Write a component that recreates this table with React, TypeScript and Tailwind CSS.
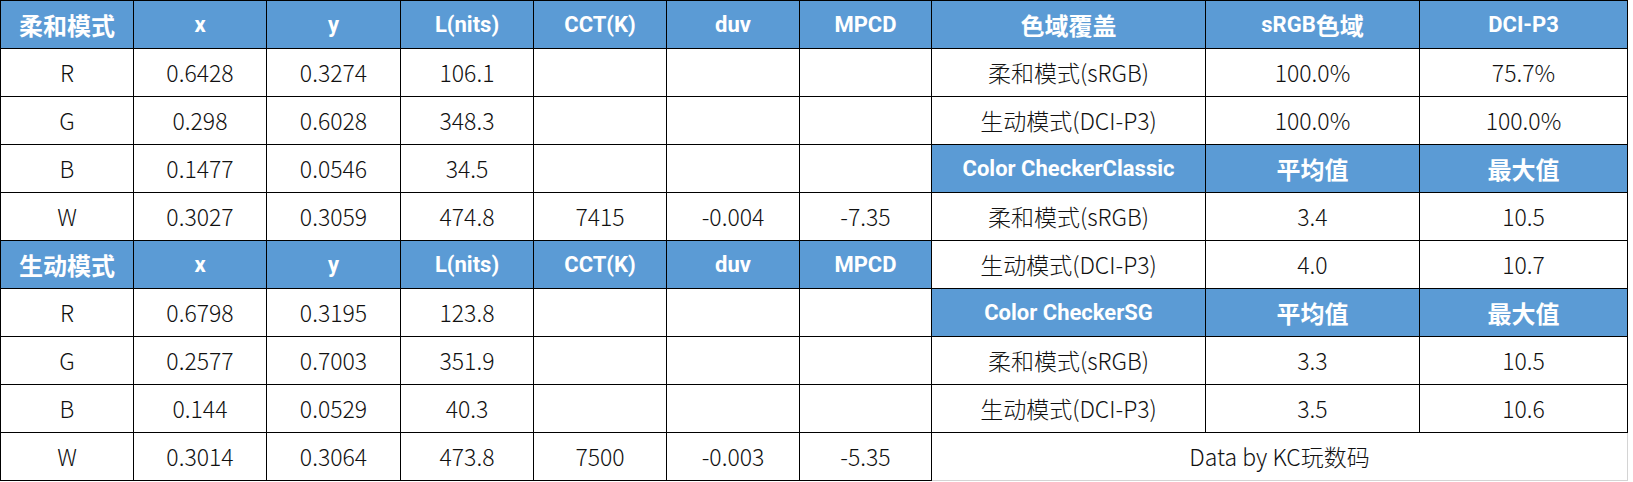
import React from 'react';

type Row = { head?: boolean; cells: string[] };

// left block: two mode tables stacked
const leftRows: Row[] = [
  { head: true, cells: ['柔和模式', 'x', 'y', 'L(nits)', 'CCT(K)', 'duv', 'MPCD'] },
  { cells: ['R', '0.6428', '0.3274', '106.1', '', '', ''] },
  { cells: ['G', '0.298', '0.6028', '348.3', '', '', ''] },
  { cells: ['B', '0.1477', '0.0546', '34.5', '', '', ''] },
  { cells: ['W', '0.3027', '0.3059', '474.8', '7415', '-0.004', '-7.35'] },
  { head: true, cells: ['生动模式', 'x', 'y', 'L(nits)', 'CCT(K)', 'duv', 'MPCD'] },
  { cells: ['R', '0.6798', '0.3195', '123.8', '', '', ''] },
  { cells: ['G', '0.2577', '0.7003', '351.9', '', '', ''] },
  { cells: ['B', '0.144', '0.0529', '40.3', '', '', ''] },
  { cells: ['W', '0.3014', '0.3064', '473.8', '7500', '-0.003', '-5.35'] },
];

// right block: gamut + color checker
const rightRows: Row[] = [
  { head: true, cells: ['色域覆盖', 'sRGB色域', 'DCI-P3'] },
  { cells: ['柔和模式(sRGB)', '100.0%', '75.7%'] },
  { cells: ['生动模式(DCI-P3)', '100.0%', '100.0%'] },
  { head: true, cells: ['Color CheckerClassic', '平均值', '最大值'] },
  { cells: ['柔和模式(sRGB)', '3.4', '10.5'] },
  { cells: ['生动模式(DCI-P3)', '4.0', '10.7'] },
  { head: true, cells: ['Color CheckerSG', '平均值', '最大值'] },
  { cells: ['柔和模式(sRGB)', '3.3', '10.5'] },
  { cells: ['生动模式(DCI-P3)', '3.5', '10.6'] },
];

// header text: Latin runs narrower than the CJK ones, like Excel's 等线 bold
const HeadText: React.FC<{ text: string }> = ({ text }) => {
  const runs = text.match(/[\u4e00-\u9fff]+|[^\u4e00-\u9fff]+/g) || [];
  return (
    <>
      {runs.map((r, i) =>
        /[\u4e00-\u9fff]/.test(r) ? (
          <span key={i} className="text-[24px]" style={{ fontFamily: '"Noto Sans CJK SC", sans-serif' }}>
            {r}
          </span>
        ) : (
          <span key={i} className="text-[22px]" style={{ fontFamily: 'Roboto, "Noto Sans", sans-serif' }}>
            {r}
          </span>
        )
      )}
    </>
  );
};

const Cell: React.FC<{ head?: boolean; text: string }> = ({ head, text }) => (
  <div
    className={`h-[48px] flex items-center justify-center whitespace-nowrap border-r border-b border-black ${
      head ? 'bg-[#5b9bd5] text-white font-bold' : 'bg-white text-[#111] text-[23px] font-light'
    }`}
  >
    {head ? <HeadText text={text} /> : text}
  </div>
);

export default function App() {
  return (
    <div
      className="w-[1633px] h-[482px] bg-white overflow-hidden text-[23px] leading-none"
      style={{ fontFamily: '"Noto Sans CJK SC", "Noto Sans", sans-serif' }}
    >
      <div className="grid grid-cols-[133px_133px_134px_133px_133px_133px_132px_274px_214px_208px] w-[1628px] border-l border-t border-black">
        {leftRows.map((row, i) => (
          <React.Fragment key={i}>
            {row.cells.map((c, j) => (
              <Cell key={'l' + j} head={row.head} text={c} />
            ))}
            {i < rightRows.length ? (
              rightRows[i].cells.map((c, j) => <Cell key={'r' + j} head={rightRows[i].head} text={c} />)
            ) : (
              <div className="col-span-3 h-[48px] flex items-center justify-center text-[#111] font-light border-r border-b border-[#d4d4d4]">
                Data by KC玩数码
              </div>
            )}
          </React.Fragment>
        ))}
      </div>
    </div>
  );
}
